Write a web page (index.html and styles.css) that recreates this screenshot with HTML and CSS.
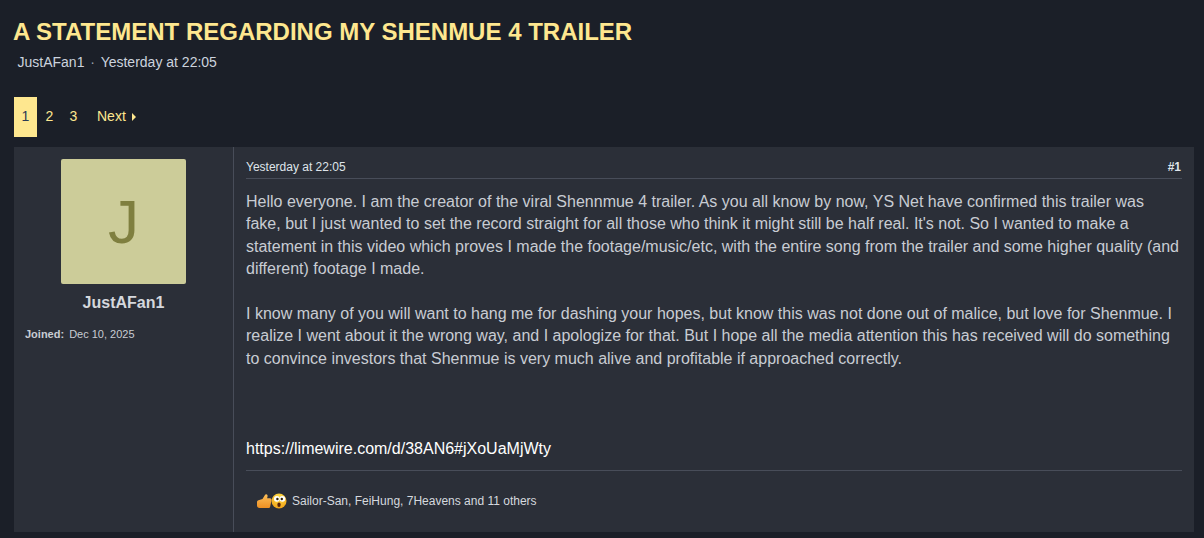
FILE: index.html
```html
<!DOCTYPE html>
<html lang="en">
<head>
  <meta charset="UTF-8" />
  <title>A statement regarding my Shenmue 4 trailer</title>
  <link rel="stylesheet" href="styles.css">
</head>
<body>
  <!-- Thread header -->
  <header class="thread-header">
    <h1 class="thread-title">A STATEMENT REGARDING MY SHENMUE 4 TRAILER</h1>
    <div class="thread-meta">
      <a class="meta-link" href="#">JustAFan1</a>
      <span class="meta-dot">·</span>
      <a class="meta-link" href="#">Yesterday at 22:05</a>
    </div>
  </header>

  <!-- Pagination -->
  <nav class="pager">
    <a class="page-link current" href="#">1</a>
    <a class="page-link" href="#">2</a>
    <a class="page-link" href="#">3</a>
    <a class="page-next" href="#">Next <span class="next-arrow"></span></a>
  </nav>

  <!-- Post -->
  <article class="post">
    <aside class="post-user">
      <div class="avatar">J</div>
      <a class="user-name" href="#">JustAFan1</a>
      <div class="user-info">
        <span class="info-label">Joined:</span>
        <span class="info-value">Dec 10, 2025</span>
      </div>
    </aside>

    <div class="post-main">
      <div class="post-attrib">
        <a href="#">Yesterday at 22:05</a>
        <a class="post-number" href="#">#1</a>
      </div>

      <div class="post-body">
        <p class="para">Hello everyone. I am the creator of the viral Shennmue 4 trailer. As you all know by now, YS Net have confirmed this trailer was fake, but I just wanted to set the record straight for all those who think it might still be half real. It's not. So I wanted to make a statement in this video which proves I made the footage/music/etc, with the entire song from the trailer and some higher quality (and different) footage I made.</p>
        <p class="para">I know many of you will want to hang me for dashing your hopes, but know this was not done out of malice, but love for Shenmue. I realize I went about it the wrong way, and I apologize for that. But I hope all the media attention this has received will do something to convince investors that Shenmue is very much alive and profitable if approached correctly.</p>
        <a class="post-url" href="#">https://limewire.com/d/38AN6#jXoUaMjWty</a>
      </div>

      <div class="reactions">
        <span class="reaction-icons">
          <!-- thumbs up -->
          <svg class="react-icon thumb" viewBox="0 0 16 16" width="16" height="16">
            <defs>
              <linearGradient id="thumb-fill" x1="0" y1="0" x2="0" y2="1">
                <stop offset="0" stop-color="#fdc05a"/>
                <stop offset="1" stop-color="#ee8f22"/>
              </linearGradient>
              <radialGradient id="face-fill" cx="0.5" cy="0.25" r="0.85">
                <stop offset="0" stop-color="#ffe14a"/>
                <stop offset="1" stop-color="#ef9a12"/>
              </radialGradient>
            </defs>
            <path d="M1 9c0-1 .6-1.500 1.500-1.800L6.500 6 8.800 2.200C9.300 1 10.900.9 11.400 2c.4.900.1 2-.3 3.200h3c1.100 0 1.700 1 1.400 2l-1.300 6.300c-.2 1-.9 1.500-1.800 1.500H3.500C2 15 1 14 1 12.500z" fill="url(#thumb-fill)"/>
          </svg>
          <!-- shocked face -->
          <svg class="react-icon wow" viewBox="0 0 16 16" width="16" height="16">
            <circle cx="8" cy="8" r="7.500" fill="url(#face-fill)"/>
            <circle cx="5.800" cy="5.800" r="2.900" fill="#fff"/>
            <circle cx="11.400" cy="5.800" r="2.900" fill="#fff"/>
            <circle cx="6.400" cy="6" r="1.200" fill="#2e2008"/>
            <circle cx="10.800" cy="6" r="1.200" fill="#2e2008"/>
            <ellipse cx="8" cy="11.800" rx="1.700" ry="2.200" fill="#5a2408"/>
          </svg>
        </span>
        <a class="reaction-names" href="#">Sailor-San, FeiHung, 7Heavens and 11 others</a>
      </div>
    </div>
  </article>
</body>
</html>
```

FILE: styles.css
```css
html, body {
  height: 538px;
  overflow: hidden;
}

body {
  margin: 0;
  padding: 0 10px 0 14px;
  background: #1b1f28;
  font-family: "Liberation Sans", Arial, sans-serif;
  color: #c8ccd3;
}

a {
  color: inherit;
  text-decoration: none;
}

.thread-header {
  padding-top: 17px;
}

.thread-title {
  margin: 0 0 0 -1px;
  font-size: 24px;
  line-height: 29px;
  font-weight: bold;
  color: #fee78f;
}

.thread-meta {
  margin-top: 8px;
  padding-left: 3.500px;
  font-size: 14px;
  line-height: 17px;
  color: #ccd3de;
}

.meta-dot {
  margin: 0 2px 0 2px;
  color: #9aa2ad;
}

.pager {
  display: flex;
  align-items: center;
  height: 40px;
  margin-top: 26px;
  font-size: 14px;
}

.page-link {
  display: flex;
  align-items: center;
  justify-content: center;
  box-sizing: border-box;
  width: 23px;
  height: 40px;
  margin-right: 1px;
  padding-bottom: 2px;
  color: #fee78f;
}

.page-link.current {
  background: #fee78f;
  color: #2b3a55;
}

.page-next {
  display: flex;
  align-items: center;
  gap: 6px;
  margin-left: 11px;
  padding-bottom: 2px;
  color: #fee78f;
}

.next-arrow {
  width: 0;
  height: 0;
  margin-top: 2px;
  border-left: 4px solid #fee78f;
  border-top: 4px solid transparent;
  border-bottom: 4px solid transparent;
}

.post {
  display: flex;
  height: 385px;
  margin-top: 10px;
  background: #2b2f38;
}

.post-user {
  box-sizing: border-box;
  flex: 0 0 220px;
  padding-top: 12px;
  border-right: 1px solid #484d59;
  text-align: center;
}

.avatar {
  width: 125px;
  height: 125px;
  margin: 0 auto;
  border-radius: 2px;
  background: #cccc99;
  color: #7f7f3f;
  font-size: 62px;
  line-height: 125px;
}

.user-name {
  display: block;
  margin-top: 9px;
  font-size: 16px;
  line-height: 19px;
  font-weight: bold;
  color: #d5d8dd;
}

.user-info {
  display: flex;
  gap: 5px;
  margin-top: 16px;
  padding-left: 11px;
  font-size: 11px;
  line-height: 13px;
}

.info-label {
  font-weight: bold;
}

.post-main {
  display: flex;
  flex-direction: column;
  flex: 1;
  min-width: 0;
  padding: 0 12px;
}

.post-attrib {
  display: flex;
  justify-content: space-between;
  height: 32px;
  padding-top: 13px;
  box-sizing: border-box;
  border-bottom: 1px solid #484d59;
  font-size: 12px;
  line-height: 14px;
  color: #dfe4ea;
}

.post-number {
  font-weight: bold;
  margin-right: 1px;
}

.post-body {
  flex: 1;
  padding-top: 12px;
  border-bottom: 1px solid #484d59;
  font-size: 16px;
  line-height: 22.400px;
}

.para {
  margin: 0 0 22.400px;
}

.post-url {
  display: block;
  margin-top: 68px;
  color: #fff;
}

.reactions {
  display: flex;
  align-items: center;
  box-sizing: border-box;
  height: 61px;
  padding: 0 0 2px 10px;
  font-size: 12px;
  color: #d5d9df;
}

.reaction-icons {
  display: flex;
  margin-right: 5px;
}

.react-icon.wow {
  margin-left: -1px;
}
```
